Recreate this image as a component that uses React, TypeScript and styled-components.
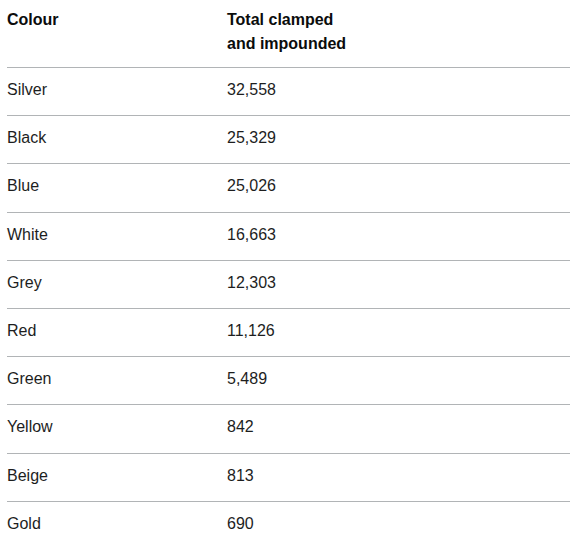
import { createGlobalStyle } from 'styled-components'
import styled from 'styled-components'

const GlobalStyle = createGlobalStyle`
  html, body {
    margin: 0;
    padding: 0;
    background: #fff;
  }
  body {
    font-family: "Liberation Sans", Arial, sans-serif;
    color: #0b0c0c;
  }
`

const Wrapper = styled.div`
  padding-left: 7px;
`

const Table = styled.table`
  width: 100%;
  border-collapse: collapse;
  border-spacing: 0;
  font-size: 16px;
  line-height: 24px;
`

const HeadCell = styled.th<{ $first?: boolean }>`
  box-sizing: border-box;
  text-align: left;
  vertical-align: top;
  font-weight: 700;
  padding: 8px 20px 11px 0;
  width: ${p => (p.$first ? '220px' : 'auto')};
  border-bottom: 1px solid #b1b4b6;
`

const Cell = styled.td`
  text-align: left;
  vertical-align: top;
  padding: 10px 20px 13.2px 0;
  border-bottom: 1px solid #b1b4b6;
  color: #1d1e1e;
`

const LastRow = styled.tr`
  td { border-bottom: none; }
`

const rows: [string, string][] = [
  ['Silver', '32,558'],
  ['Black', '25,329'],
  ['Blue', '25,026'],
  ['White', '16,663'],
  ['Grey', '12,303'],
  ['Red', '11,126'],
  ['Green', '5,489'],
  ['Yellow', '842'],
  ['Beige', '813'],
  ['Gold', '690'],
]

export default function App() {
  return (
    <>
      <GlobalStyle />
      <Wrapper>
        <Table>
          <thead>
            <tr>
              <HeadCell $first>Colour</HeadCell>
              <HeadCell>Total clamped<br />and impounded</HeadCell>
            </tr>
          </thead>
          <tbody>
            {rows.map(([colour, total], i) =>
              i === rows.length - 1 ? (
                <LastRow key={colour}>
                  <Cell>{colour}</Cell>
                  <Cell>{total}</Cell>
                </LastRow>
              ) : (
                <tr key={colour}>
                  <Cell>{colour}</Cell>
                  <Cell>{total}</Cell>
                </tr>
              )
            )}
          </tbody>
        </Table>
      </Wrapper>
    </>
  )
}
